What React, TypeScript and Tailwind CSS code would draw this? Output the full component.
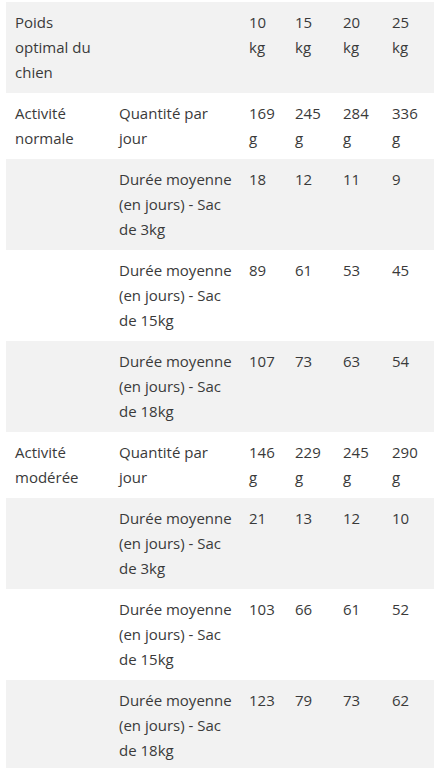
import React from "react";

type Row = { a: React.ReactNode; b: React.ReactNode; v: React.ReactNode[] };

const dur = (kg: string) => (
  <>
    Durée moyenne
    <br />
    (en jours) - Sac
    <br />
    de {kg}
  </>
);
const qte = (
  <>
    Quantité par
    <br />
    jour
  </>
);
const g = (n: string) => (
  <>
    {n}
    <br />g
  </>
);

const rows: Row[] = [
  {
    a: (
      <>
        Poids
        <br />
        optimal du
        <br />
        chien
      </>
    ),
    b: "",
    v: [
      <>10<br />kg</>,
      <>15<br />kg</>,
      <>20<br />kg</>,
      <>25<br />kg</>,
    ],
  },
  { a: <>Activité<br />normale</>, b: qte, v: [g("169"), g("245"), g("284"), g("336")] },
  { a: "", b: dur("3kg"), v: ["18", "12", "11", "9"] },
  { a: "", b: dur("15kg"), v: ["89", "61", "53", "45"] },
  { a: "", b: dur("18kg"), v: ["107", "73", "63", "54"] },
  { a: <>Activité<br />modérée</>, b: qte, v: [g("146"), g("229"), g("245"), g("290")] },
  { a: "", b: dur("3kg"), v: ["21", "13", "12", "10"] },
  { a: "", b: dur("15kg"), v: ["103", "66", "61", "52"] },
  { a: "", b: dur("18kg"), v: ["123", "79", "73", "62"] },
];

export default function App() {
  return (
    <div className="w-[441px] min-h-[768px] bg-white pt-[2px] pl-[6px] font-['Open_Sans',sans-serif] text-[15px] leading-[25px] text-[#3a3a3a]">
      <table className="w-[428px] table-fixed border-collapse">
        <colgroup>
          <col className="w-[104px]" />
          <col className="w-[130px]" />
          <col className="w-[46px]" />
          <col className="w-[48px]" />
          <col className="w-[49px]" />
          <col className="w-[51px]" />
        </colgroup>
        <tbody>
          {rows.map((r, i) => (
            <tr key={i} className={i % 2 === 0 ? "bg-[#f2f2f2]" : "bg-white"}>
              <td className="px-[9px] py-2 align-top whitespace-nowrap">{r.a}</td>
              <td className="px-[9px] py-2 align-top whitespace-nowrap">{r.b}</td>
              {r.v.map((v, j) => (
                <td key={j} className="px-[9px] py-2 align-top whitespace-nowrap">
                  {v}
                </td>
              ))}
            </tr>
          ))}
        </tbody>
      </table>
    </div>
  );
}
